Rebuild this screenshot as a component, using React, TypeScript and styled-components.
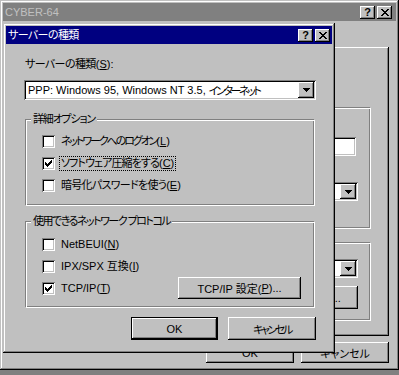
import React from "react";
import styled, { createGlobalStyle, css } from "styled-components";

const Global = createGlobalStyle`
  html, body { margin: 0; padding: 0; }
  body {
    width: 399px; height: 375px; overflow: hidden; background: #808080;
    font-family: "Liberation Sans", "Noto Sans CJK JP", sans-serif;
    font-size: 11px; color: #000; letter-spacing: 0;
    font-feature-settings: "palt" 1;
  }
`;

const raised = css`
  box-shadow: inset -1px -1px #000, inset 1px 1px #fff, inset -2px -2px #808080;
`;
const frame = css`
  box-shadow: inset -1px -1px #000, inset 1px 1px #c0c0c0, inset -2px -2px #808080, inset 2px 2px #fff;
`;
const sunken = css`
  box-shadow: inset 1px 1px #808080, inset -1px -1px #fff, inset 2px 2px #000, inset -2px -2px #c0c0c0;
`;
const etched = css`
  border-top: 1px solid #808080; border-left: 1px solid #808080;
  border-right: 1px solid #fff; border-bottom: 1px solid #fff;
  box-shadow: inset 1px 1px #fff, inset -1px -1px #808080;
`;

const Desktop = styled.div`
  position: relative; width: 399px; height: 375px; background: #808080;
`;

const Window = styled.div<{ $left: number; $top: number; $w: number; $h: number }>`
  position: absolute; left: ${(p) => p.$left}px; top: ${(p) => p.$top}px;
  width: ${(p) => p.$w}px; height: ${(p) => p.$h}px; box-sizing: border-box;
  padding: 3px; background: #c0c0c0; ${frame};
  display: flex; flex-direction: column;
`;

const TitleBar = styled.div<{ $active: boolean; $padRight: number }>`
  height: 18px; flex: none; display: flex; align-items: center;
  padding: 0 ${(p) => p.$padRight}px 0 2px;
  background: ${(p) => (p.$active ? "#000080" : "#808080")};
  color: ${(p) => (p.$active ? "#fff" : "#c0c0c0")};
`;

const TitleText = styled.div`
  flex: 1; white-space: nowrap; line-height: 18px;
`;

const CaptionGroup = styled.div`
  display: flex; gap: 2px;
`;

const CaptionButton = styled.div`
  width: 15px; height: 13px; box-sizing: border-box; background: #c0c0c0; ${raised};
  display: flex; align-items: center; justify-content: center;
  color: #000; font-weight: bold; font-size: 11px; line-height: 11px;
  font-family: "Liberation Sans", sans-serif;
`;

const PixelSvg = styled.svg`
  display: block; flex: none;
`;

function Pixels({ rows }: { rows: string[] }) {
  const w = rows[0].length;
  const h = rows.length;
  const rects: React.ReactNode[] = [];
  rows.forEach((r, y) =>
    r.split("").forEach((c, x) => {
      if (c === "#") rects.push(<rect key={`${x}-${y}`} x={x} y={y} width={1} height={1} />);
    })
  );
  return (
    <PixelSvg width={w} height={h} viewBox={`0 0 ${w} ${h}`} shapeRendering="crispEdges" fill="#000">
      {rects}
    </PixelSvg>
  );
}

const CLOSE = ["##....##", ".##..##.", "..####..", "...##...", "..####..", ".##..##.", "##....##"];
const CHECK = ["......#", ".....##", "#...###", "##.###.", "#####..", ".###...", "..#...."];
const ARROW = ["#######", ".#####.", "..###..", "...#..."];

function Captions() {
  return (
    <CaptionGroup>
      <CaptionButton>?</CaptionButton>
      <CaptionButton>
        <Pixels rows={CLOSE} />
      </CaptionButton>
    </CaptionGroup>
  );
}

const Key = styled.u`
  text-decoration: underline; text-underline-offset: 1px;
`;

/* a run of Japanese text, tightened to the narrow proportional kana of the original */
const Jp = styled.span<{ $track: number }>`
  letter-spacing: ${(p) => p.$track}px;
`;

const PushButton = styled.div<{ $w: number; $h: number; $default?: boolean }>`
  width: ${(p) => p.$w}px; height: ${(p) => p.$h}px; box-sizing: border-box; flex: none;
  background: #c0c0c0; ${raised};
  border: ${(p) => (p.$default ? "1px solid #000" : "none")};
  display: flex; align-items: center; justify-content: center; white-space: pre;
`;

const Combo = styled.div<{ $w: number; $h: number }>`
  width: ${(p) => p.$w}px; height: ${(p) => p.$h}px; box-sizing: border-box; flex: none;
  background: #fff; ${sunken}; padding: 2px; display: flex; align-items: stretch;
`;

const ComboText = styled.div`
  flex: 1; padding-left: 2px; display: flex; align-items: center; white-space: pre; overflow: hidden;
`;

const ComboArrow = styled.div`
  width: 16px; flex: none; background: #c0c0c0; ${raised};
  display: flex; align-items: center; justify-content: center;
`;

/* ---------- background window ---------- */

const BgBody = styled.div`
  flex: 1; display: flex; flex-direction: column; padding: 0 7px 0 6px;
`;

const Sheet = styled.div`
  margin-top: 26px; height: 289px; box-sizing: border-box; ${raised};
  padding: 60px 18px 0 0; display: flex; flex-direction: column; align-items: flex-end;
`;

const BgGroup = styled.div<{ $h: number; $mt: number }>`
  width: 320px; height: ${(p) => p.$h}px; margin-top: ${(p) => p.$mt}px; box-sizing: border-box;
  ${etched}; padding-right: 12px; display: flex; flex-direction: column; align-items: flex-end;
`;

const TextField = styled.div`
  width: 160px; height: 19px; box-sizing: border-box; background: #fff; ${sunken};
  margin-top: 29px; margin-right: 2px;
`;

const Spaced = styled.div<{ $mt: number }>`
  margin-top: ${(p) => p.$mt}px; display: flex;
`;

const ButtonRow = styled.div<{ $gap: number; $mt: number }>`
  display: flex; justify-content: flex-end; gap: ${(p) => p.$gap}px; margin-top: ${(p) => p.$mt}px;
`;

/* ---------- front dialog ---------- */

const DialogBody = styled.div`
  display: flex; flex-direction: column; width: 292px; padding: 12px 0 0 18px;
`;

const FieldLabel = styled.div`
  line-height: 16px; height: 16px; padding-left: 1px; white-space: nowrap;
`;

const Group = styled.div<{ $mt: number }>`
  position: relative; margin-top: ${(p) => p.$mt}px; margin-left: 1px;
  width: 290px; height: 87px; box-sizing: border-box; ${etched};
  display: flex; flex-direction: column; padding: 0 13px 0 16px;
`;

const GroupInner = styled.div<{ $pt: number }>`
  padding-top: ${(p) => p.$pt}px; display: flex; flex-direction: column;
`;

const Legend = styled.div`
  position: absolute; top: -8px; left: 5px; padding: 0 2px; background: #c0c0c0;
  line-height: 14px; white-space: pre;
`;

const CheckRow = styled.div`
  height: 22px; display: flex; align-items: center; gap: 5px;
`;

const CheckBox = styled.div`
  width: 13px; height: 13px; box-sizing: border-box; flex: none; background: #fff; ${sunken};
  padding: 3px 0 0 3px;
`;

const CheckLabel = styled.span<{ $focus?: boolean }>`
  line-height: 13px; padding: 0 1px; white-space: pre;
  outline: ${(p) => (p.$focus ? "1px dotted #000" : "none")};
`;

const RowButtonSlot = styled.div`
  margin-left: auto; display: flex;
`;

function Check({ label, checked, focus }: { label: React.ReactNode; checked?: boolean; focus?: boolean }) {
  return (
    <CheckRow>
      <CheckBox>{checked && <Pixels rows={CHECK} />}</CheckBox>
      <CheckLabel $focus={focus}>{label}</CheckLabel>
    </CheckRow>
  );
}

function ArrowCombo({ w, h, children }: { w: number; h: number; children?: React.ReactNode }) {
  return (
    <Combo $w={w} $h={h}>
      <ComboText>{children}</ComboText>
      <ComboArrow>
        <Pixels rows={ARROW} />
      </ComboArrow>
    </Combo>
  );
}

export default function App() {
  return (
    <>
      <Global />
      <Desktop>
        <Window $left={0} $top={0} $w={399} $h={370}>
          <TitleBar $active={false} $padRight={4}>
            <TitleText>CYBER-64</TitleText>
            <Captions />
          </TitleBar>
          <BgBody>
            <Sheet>
              <BgGroup $h={122} $mt={0}>
                <TextField />
                <Spaced $mt={26}>
                  <ArrowCombo w={180} h={19} />
                </Spaced>
              </BgGroup>
              <BgGroup $h={79} $mt={13}>
                <Spaced $mt={16}>
                  <ArrowCombo w={180} h={19} />
                </Spaced>
                <Spaced $mt={8}>
                  <PushButton $w={80} $h={23}>
                    設定(<Key>S</Key>)...
                  </PushButton>
                </Spaced>
              </BgGroup>
            </Sheet>
            <ButtonRow $gap={7} $mt={6}>
              <PushButton $w={88} $h={21}>OK</PushButton>
              <PushButton $w={88} $h={21}>キャンセル</PushButton>
            </ButtonRow>
          </BgBody>
        </Window>

        <Window $left={3} $top={23} $w={332} $h={330}>
          <TitleBar $active $padRight={2}>
            <TitleText>
              <Jp $track={-0.6}>サーバーの種類</Jp>
            </TitleText>
            <Captions />
          </TitleBar>
          <DialogBody>
            <FieldLabel>
              <Jp $track={-0.6}>サーバーの種類</Jp>(<Key>S</Key>):
            </FieldLabel>
            <Spaced $mt={8}>
              <ArrowCombo w={292} h={20}>
                PPP: Windows 95, Windows NT 3.5, <Jp $track={-2.4}>インターネット</Jp>
              </ArrowCombo>
            </Spaced>
            <Group $mt={19}>
              <Legend>
                <Jp $track={-1.2}>詳細オプション</Jp>
              </Legend>
              <GroupInner $pt={10}>
                <Check
                  label={
                    <>
                      <Jp $track={-2.1}>ネットワークへのログオン</Jp>(<Key>L</Key>)
                    </>
                  }
                />
                <Check
                  checked
                  focus
                  label={
                    <>
                      <Jp $track={-0.9}>ソフトウェア圧縮をする</Jp>(<Key>C</Key>)
                    </>
                  }
                />
                <Check
                  label={
                    <>
                      <Jp $track={-0.7}>暗号化パスワードを使う</Jp>(<Key>E</Key>)
                    </>
                  }
                />
              </GroupInner>
            </Group>
            <Group $mt={15}>
              <Legend>
                <Jp $track={-1.5}>使用できるネットワーク プロトコル</Jp>
              </Legend>
              <GroupInner $pt={11}>
                <Check
                  label={
                    <>
                      NetBEUI(<Key>N</Key>)
                    </>
                  }
                />
                <Check
                  label={
                    <>
                      IPX/SPX 互換(<Key>I</Key>)
                    </>
                  }
                />
                <CheckRow>
                  <CheckBox>
                    <Pixels rows={CHECK} />
                  </CheckBox>
                  <CheckLabel>
                    TCP/IP(<Key>T</Key>)
                  </CheckLabel>
                  <RowButtonSlot>
                    <PushButton $w={123} $h={22}>
                      TCP/IP 設定(<Key>P</Key>)...
                    </PushButton>
                  </RowButtonSlot>
                </CheckRow>
              </GroupInner>
            </Group>
            <ButtonRow $gap={10} $mt={9}>
              <PushButton $w={87} $h={23} $default>
                OK
              </PushButton>
              <PushButton $w={88} $h={23}>
                <Jp $track={-2.4}>キャンセル</Jp>
              </PushButton>
            </ButtonRow>
          </DialogBody>
        </Window>
      </Desktop>
    </>
  );
}
